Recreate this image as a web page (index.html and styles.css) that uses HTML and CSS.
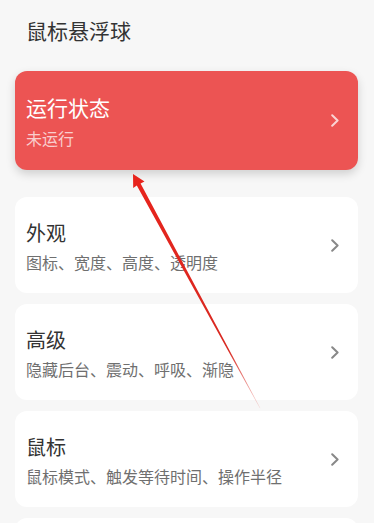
FILE: index.html
```html
<!DOCTYPE html>
<html lang="zh-CN">
<head>
<meta charset="utf-8">
<title>鼠标悬浮球</title>
<link rel="stylesheet" href="styles.css">
</head>
<body>
<div class="page">
  <header class="header">鼠标悬浮球</header>
  <div class="list">
    <div class="card card-active">
      <div class="card-text">
        <div class="card-title">运行状态</div>
        <div class="card-sub">未运行</div>
      </div>
      <svg class="chev" viewBox="0 0 8 13" width="8" height="13"><path d="M1.2 1.2 L6.6 6.5 L1.2 11.8" fill="none" stroke="currentColor" stroke-width="2" stroke-linecap="round" stroke-linejoin="round"/></svg>
    </div>
    <div class="card">
      <div class="card-text">
        <div class="card-title">外观</div>
        <div class="card-sub">图标、宽度、高度、透明度</div>
      </div>
      <svg class="chev" viewBox="0 0 8 13" width="8" height="13"><path d="M1.2 1.2 L6.6 6.5 L1.2 11.8" fill="none" stroke="currentColor" stroke-width="2" stroke-linecap="round" stroke-linejoin="round"/></svg>
    </div>
    <div class="card">
      <div class="card-text">
        <div class="card-title">高级</div>
        <div class="card-sub">隐藏后台、震动、呼吸、渐隐</div>
      </div>
      <svg class="chev" viewBox="0 0 8 13" width="8" height="13"><path d="M1.2 1.2 L6.6 6.5 L1.2 11.8" fill="none" stroke="currentColor" stroke-width="2" stroke-linecap="round" stroke-linejoin="round"/></svg>
    </div>
    <div class="card">
      <div class="card-text">
        <div class="card-title">鼠标</div>
        <div class="card-sub">鼠标模式、触发等待时间、操作半径</div>
      </div>
      <svg class="chev" viewBox="0 0 8 13" width="8" height="13"><path d="M1.2 1.2 L6.6 6.5 L1.2 11.8" fill="none" stroke="currentColor" stroke-width="2" stroke-linecap="round" stroke-linejoin="round"/></svg>
    </div>
    <div class="card"></div>
  </div>
  <svg class="annot" viewBox="0 0 374 523" width="374" height="523">
    <defs>
      <linearGradient id="fade" gradientUnits="userSpaceOnUse" x1="133" y1="174" x2="260" y2="408">
        <stop offset="0" stop-color="#e8231c"/>
        <stop offset="0.75" stop-color="#d82a22"/>
        <stop offset="1" stop-color="#d82a22" stop-opacity="0.15"/>
      </linearGradient>
    </defs>
    <polygon fill="url(#fade)" points="133,174 144.5,181.4 140.6,183.6 260.4,408.2 259.6,407.8 136.8,185.6 133.2,188"/>
  </svg>
</div>
</body>
</html>
```

FILE: styles.css
```css
html, body {
  margin: 0;
  padding: 0;
}
body {
  background: #f7f7f7;
  font-family: "Noto Sans CJK SC", "Noto Sans", sans-serif;
  overflow: hidden;
}
.page {
  position: relative;
  width: 374px;
  height: 523px;
  overflow: hidden;
}
.header {
  padding: 16px 0 0 26px;
  font-size: 21px;
  line-height: 28px;
  color: #333333;
}
.list {
  display: flex;
  flex-direction: column;
  gap: 11px;
  padding: 27px 16px 0 15px;
}
.card {
  display: flex;
  align-items: center;
  justify-content: space-between;
  background: #ffffff;
  border-radius: 12px;
  height: 96px;
  padding: 0 19px 0 11px;
  box-sizing: border-box;
  color: #888888;
  flex: none;
}
.card-active {
  height: 99px;
  background: #ec5453;
  box-shadow: 0 4px 10px rgba(0, 0, 0, 0.16);
  margin-bottom: 16px;
  color: rgba(255, 255, 255, 0.75);
}
.card-text {
  display: flex;
  flex-direction: column;
  gap: 4px;
  padding-top: 1px;
}
.card-title {
  font-size: 20px;
  line-height: 28px;
  color: #333333;
}
.card-sub {
  font-size: 16px;
  line-height: 22px;
  color: #6f6f6f;
}
.card-active .card-text {
  gap: 5px;
}
.card-active .card-title {
  color: #ffffff;
  font-size: 21px;
  line-height: 29px;
}
.card-active .card-sub {
  color: rgba(255, 255, 255, 0.72);
}
.chev {
  display: block;
  flex: none;
}
.annot {
  position: absolute;
  left: 0;
  top: 0;
  pointer-events: none;
}
```
